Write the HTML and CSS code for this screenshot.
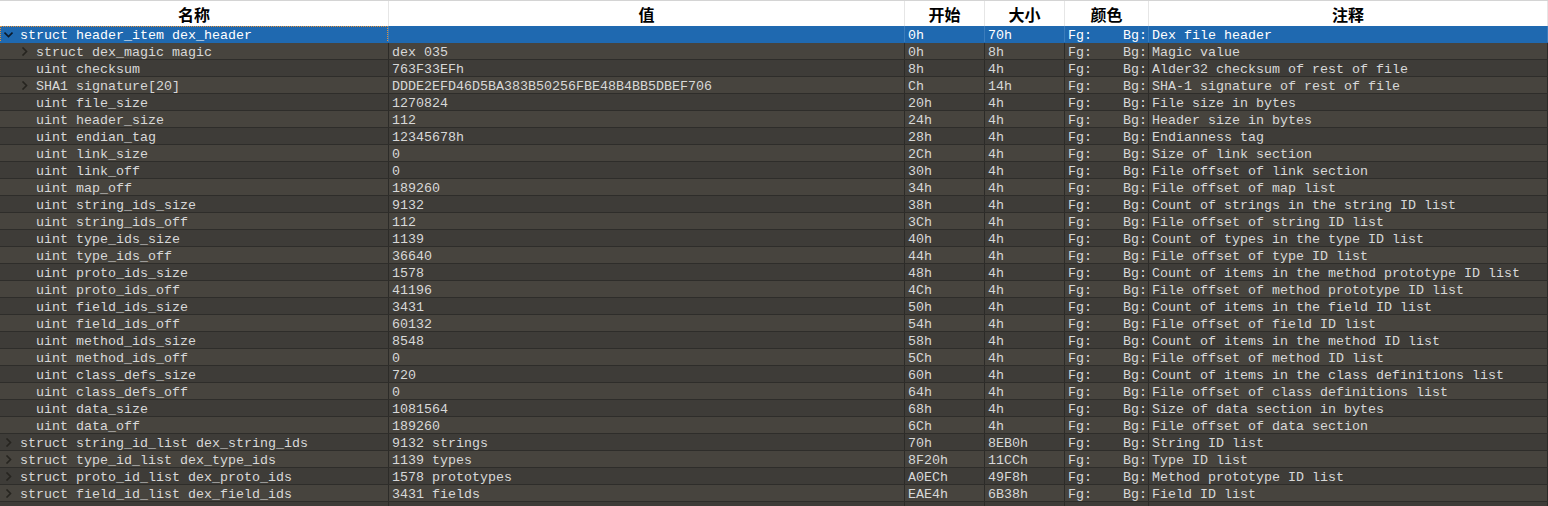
FILE: index.html
```html
<!DOCTYPE html>
<html>
<head>
<meta charset="utf-8">
<link rel="stylesheet" href="styles.css">
</head>
<body>
<div class="view">
  <div class="row head">
    <div class="c">名称</div><div class="c">值</div><div class="c">开始</div><div class="c">大小</div><div class="c">颜色</div><div class="c">注释</div>
  </div>
  <div id="rows"></div>
</div>
<script src="app.js"></script>
</body>
</html>
```
FILE: styles.css
```css
html, body { margin: 0; padding: 0; background: #3d3b37; overflow: hidden; }
.view { width: 1548px; height: 506px; overflow: hidden; }
.row { display: grid; grid-template-columns: 389px 516px 80px 80px 84px 399px; }
.row .c { box-sizing: border-box; border-right: 1px solid #2c2b28; white-space: nowrap; overflow: hidden; }
.head { height: 26px; box-sizing: border-box; border-top: 1px solid #d4d4d4; background: #fff; }
.head .c { border-right: 1px solid #e6e6e6; font-family: "Noto Sans CJK SC", sans-serif; font-weight: 700; font-size: 16px; line-height: 27px; color: #000; text-align: center; }
.data { height: 17px; box-sizing: border-box; border-bottom: 1px solid #2e2d2a; background: #3e3c38;
  font-family: "Liberation Mono", monospace; font-size: 13.333px; line-height: 16px; color: #d8d8d8; }
.data.odd { background: #47443e; }
.data .c { padding-left: 3px; padding-top: 2px; height: 16px; }
.data .name { display: flex; align-items: center; padding-left: 0; padding-top: 0; position: relative; }
.data .name.lv1 { padding-left: 16px; }
.tw { width: 16px; height: 16px; flex: none; display: flex; align-items: center; justify-content: center; }
.tw svg { width: 9px; height: 9px; }
.nm { padding-left: 4px; padding-top: 2px; line-height: 16px; height: 16px; box-sizing: border-box; }
.color { display: flex; justify-content: space-between; padding-right: 1px; }
.data.sel { background: #1f69b0; color: #fff; border-bottom-color: #1f69b0; }
.data.sel .c { border-right-color: #3b7cbb; }
.data.sel .name::after { content: ""; position: absolute; left: 0; top: 0; right: 0; bottom: -1px; border: 1px dotted #e0913c; }
```
FILE: app.js
```js
const rows = [
 [0,'e','struct header_item dex_header','','0h','70h','Dex file header'],
 [1,'c','struct dex_magic magic','dex 035','0h','8h','Magic value'],
 [1,'','uint checksum','763F33EFh','8h','4h','Alder32 checksum of rest of file'],
 [1,'c','SHA1 signature[20]','DDDE2EFD46D5BA383B50256FBE48B4BB5DBEF706','Ch','14h','SHA-1 signature of rest of file'],
 [1,'','uint file_size','1270824','20h','4h','File size in bytes'],
 [1,'','uint header_size','112','24h','4h','Header size in bytes'],
 [1,'','uint endian_tag','12345678h','28h','4h','Endianness tag'],
 [1,'','uint link_size','0','2Ch','4h','Size of link section'],
 [1,'','uint link_off','0','30h','4h','File offset of link section'],
 [1,'','uint map_off','189260','34h','4h','File offset of map list'],
 [1,'','uint string_ids_size','9132','38h','4h','Count of strings in the string ID list'],
 [1,'','uint string_ids_off','112','3Ch','4h','File offset of string ID list'],
 [1,'','uint type_ids_size','1139','40h','4h','Count of types in the type ID list'],
 [1,'','uint type_ids_off','36640','44h','4h','File offset of type ID list'],
 [1,'','uint proto_ids_size','1578','48h','4h','Count of items in the method prototype ID list'],
 [1,'','uint proto_ids_off','41196','4Ch','4h','File offset of method prototype ID list'],
 [1,'','uint field_ids_size','3431','50h','4h','Count of items in the field ID list'],
 [1,'','uint field_ids_off','60132','54h','4h','File offset of field ID list'],
 [1,'','uint method_ids_size','8548','58h','4h','Count of items in the method ID list'],
 [1,'','uint method_ids_off','0','5Ch','4h','File offset of method ID list'],
 [1,'','uint class_defs_size','720','60h','4h','Count of items in the class definitions list'],
 [1,'','uint class_defs_off','0','64h','4h','File offset of class definitions list'],
 [1,'','uint data_size','1081564','68h','4h','Size of data section in bytes'],
 [1,'','uint data_off','189260','6Ch','4h','File offset of data section'],
 [0,'c','struct string_id_list dex_string_ids','9132 strings','70h','8EB0h','String ID list'],
 [0,'c','struct type_id_list dex_type_ids','1139 types','8F20h','11CCh','Type ID list'],
 [0,'c','struct proto_id_list dex_proto_ids','1578 prototypes','A0ECh','49F8h','Method prototype ID list'],
 [0,'c','struct field_id_list dex_field_ids','3431 fields','EAE4h','6B38h','Field ID list'],
 [0,'c','struct method_id_list dex_method_ids','8548 methods','1561Ch','10540h','Method ID list']
];
const esc = s => s.replace(/&/g,'&amp;').replace(/</g,'&lt;');
const chevR = '<svg viewBox="0 0 9 9"><path d="M2.5 0.5 L6.5 4.5 L2.5 8.5" fill="none" stroke="#26241f" stroke-width="1.6"/></svg>';
const chevD = '<svg viewBox="0 0 9 9"><path d="M0.5 2.5 L4.5 6.5 L8.5 2.5" fill="none" stroke="#0b1a2a" stroke-width="1.6"/></svg>';
let html = '';
rows.forEach((r, i) => {
  const [lv, tw, name, val, st, sz, cm] = r;
  let cls = 'row data';
  if (i === 0) cls += ' sel'; else if (i % 2 === 1) cls += ' odd';
  const icon = tw === 'e' ? chevD : tw === 'c' ? chevR : '';
  html += `<div class="${cls}">` +
    `<div class="c name${lv ? ' lv1' : ''}"><span class="tw">${icon}</span><span class="nm">${esc(name)}</span></div>` +
    `<div class="c">${esc(val)}</div><div class="c">${st}</div><div class="c">${sz}</div>` +
    `<div class="c color"><span>Fg:</span><span>Bg:</span></div><div class="c">${esc(cm)}</div></div>`;
});
document.getElementById('rows').innerHTML = html;
```
